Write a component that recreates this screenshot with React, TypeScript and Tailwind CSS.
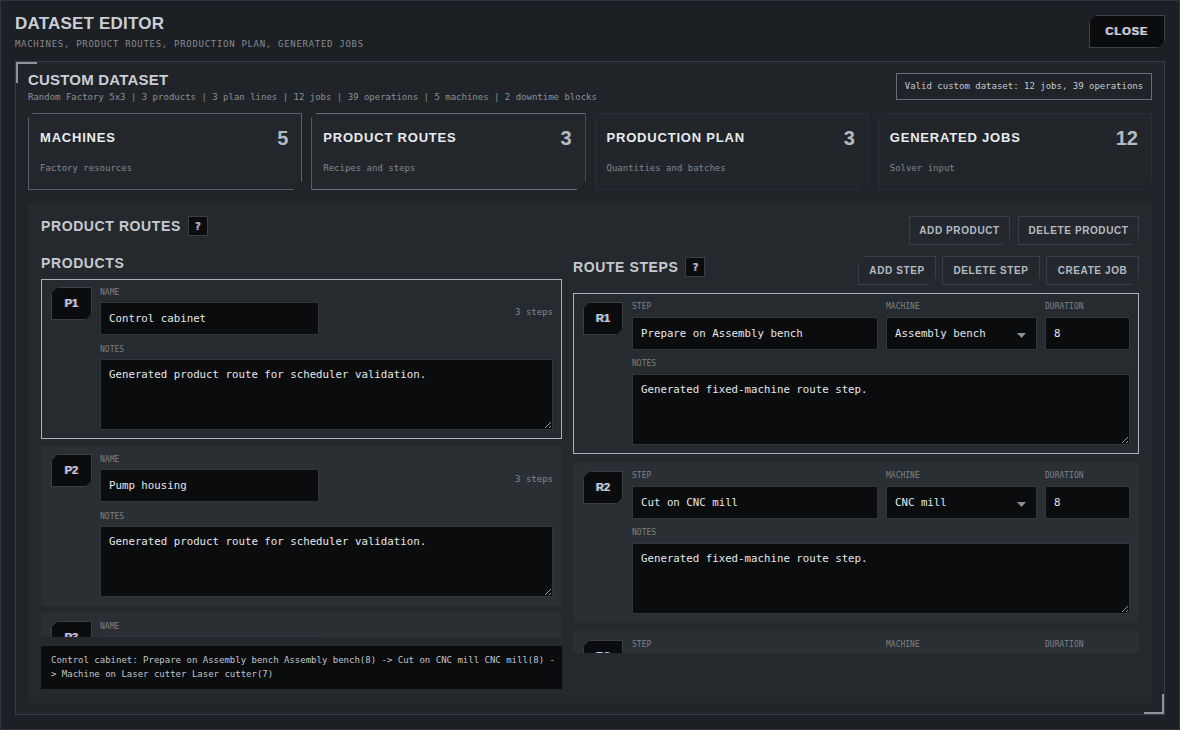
import React from "react";

const head = "font-['Liberation_Sans',Arial,sans-serif] font-bold uppercase";
const mono = "font-['DejaVu_Sans_Mono','Liberation_Mono',monospace]";
const chroma = "[text-shadow:-0.7px_0_rgba(80,150,255,0.75),0.7px_0_rgba(255,110,70,0.6)]";

const cutTab =
  "[clip-path:polygon(5px_0,100%_0,100%_calc(100%_-_9px),calc(100%_-_9px)_100%,0_100%,0_5px)]";
const cutBoth =
  "[clip-path:polygon(7px_0,100%_0,100%_calc(100%_-_7px),calc(100%_-_7px)_100%,0_100%,0_7px)]";
const cutBR =
  "[clip-path:polygon(0_0,100%_0,100%_calc(100%_-_7px),calc(100%_-_7px)_100%,0_100%)]";

function Label({ children, className = "" }: { children: React.ReactNode; className?: string }) {
  return (
    <div className={`${mono} text-[8px] leading-[10px] uppercase text-[#7b8188] ${className}`}>
      {children}
    </div>
  );
}

function Badge({ label, w }: { label: string; w: string }) {
  return (
    <div
      className={`${w} h-[33px] shrink-0 border border-[#3a3f46] bg-[#0b0c0e] flex items-center justify-center ${head} text-[11px] text-[#c2ccd9] ${chroma} ${cutBoth}`}
    >
      {label}
    </div>
  );
}

const inputCls = `${mono} h-[33px] border border-[#31363c] bg-[#0b0c0e] px-[8px] text-[10.75px] text-[#e4e7ea] outline-none`;
const areaCls = `${mono} block h-[71px] w-full border border-[#31363c] bg-[#0b0c0e] pl-[8px] pt-[8px] text-[10.75px] leading-[14px] text-[#e4e7ea] outline-none resize-y`;

function Button({ children, w, cut = cutBR }: { children: React.ReactNode; w: string; cut?: string }) {
  return (
    <div
      className={`${w} h-[29px] border border-[#3a3f46] bg-[#24282d] flex items-center justify-center ${head} text-[10px] tracking-[0.6px] text-[#b3bac2] ${cut}`}
    >
      {children}
    </div>
  );
}

function Help() {
  return (
    <div
      className={`w-[20px] h-[20px] border border-[#3a3f46] bg-[#0b0c0e] flex items-center justify-center ${mono} font-bold text-[10px] text-[#b8c4d6] ${chroma}`}
    >
      ?
    </div>
  );
}

function ProductCard({ id, name, selected }: { id: string; name: string; selected?: boolean }) {
  return (
    <div
      className={`h-[160px] shrink-0 border ${
        selected ? "border-[#aab0b6] bg-[#262b30]" : "border-transparent bg-[#2a2f34]"
      } pl-[9px] pr-[8px] pt-[7px] flex gap-[8px]`}
    >
      <Badge label={id} w="w-[41px]" />
      <div className="flex-1 mt-[1px]">
        <Label>Name</Label>
        <div className="mt-[4px] flex justify-between">
          <input className={`${inputCls} w-[219px]`} defaultValue={name} />
          <span className={`${mono} mt-[4px] text-[9px] leading-[12px] text-[#80868d]`}>3 steps</span>
        </div>
        <Label className="mt-[10px]">Notes</Label>
        <textarea
          className={`${areaCls} mt-[4px]`}
          defaultValue="Generated product route for scheduler validation."
        />
      </div>
    </div>
  );
}

function RouteCard({
  id,
  step,
  machine,
  dur,
  selected,
}: {
  id: string;
  step: string;
  machine: string;
  dur: string;
  selected?: boolean;
}) {
  return (
    <div
      className={`h-[161px] shrink-0 border ${
        selected ? "border-[#aab0b6] bg-[#262b30]" : "border-transparent bg-[#2a2f34]"
      } pl-[9px] pr-[8px] pt-[8px] flex gap-[9px]`}
    >
      <Badge label={id} w="w-[40px]" />
      <div className="flex-1">
        <div className="grid grid-cols-[1fr_151px_85px] gap-x-[8px]">
          <div>
            <Label>Step</Label>
            <input className={`${inputCls} mt-[5px] w-full`} defaultValue={step} />
          </div>
          <div>
            <Label>Machine</Label>
            <div
              className={`${mono} mt-[5px] h-[33px] border border-[#31363c] bg-[#0b0c0e] pl-[8px] pr-[10px] flex items-center justify-between text-[10.75px] leading-[14px] text-[#e4e7ea]`}
            >
              <span className="pt-[1px]">{machine}</span>
              <svg width="9" height="5" viewBox="0 0 9 5" className="mt-[4px]">
                <path d="M0 0 H9 L4.5 5 Z" fill="#8a9097" />
              </svg>
            </div>
          </div>
          <div>
            <Label>Duration</Label>
            <input className={`${inputCls} mt-[5px] w-full`} defaultValue={dur} />
          </div>
        </div>
        <Label className="mt-[9px]">Notes</Label>
        <textarea className={`${areaCls} mt-[5px]`} defaultValue="Generated fixed-machine route step." />
      </div>
    </div>
  );
}

const tabs = [
  { t: "Machines", n: "5", s: "Factory resources", b: "border-[#5a5f66] bg-[#23272c]" },
  { t: "Product Routes", n: "3", s: "Recipes and steps", b: "border-[#6a6f76] bg-[#23272c]" },
  { t: "Production Plan", n: "3", s: "Quantities and batches", b: "border-[#2a2f35] bg-[#22262b]" },
  { t: "Generated Jobs", n: "12", s: "Solver input", b: "border-[#2a2f35] bg-[#22262b]" },
];

export default function App() {
  return (
    <div className="w-[1180px] h-[730px] overflow-hidden border border-[#2f343a] bg-[#1c1f23]">
      {/* Header */}
      <div className="h-[60px] px-[14px] pt-[12px] flex justify-between items-start">
        <div>
          <div className={`${head} text-[17px] leading-[22px] tracking-[0.2px] text-[#c9ced5]`}>Dataset Editor</div>
          <div className={`${mono} mt-[3px] text-[9px] leading-[12px] tracking-[0.7px] text-[#858b92]`}>
            MACHINES, PRODUCT ROUTES, PRODUCTION PLAN, GENERATED JOBS
          </div>
        </div>
        <div
          className={`mt-[2px] w-[76px] h-[33px] border border-[#3c4249] bg-[#0b0c0e] flex items-center justify-center ${head} text-[11px] tracking-[1px] text-[#cfd6df] ${chroma} ${cutBoth}`}
        >
          Close
        </div>
      </div>

      {/* Panel */}
      <div className="relative mx-[14px] h-[654px] border border-[#393e45] bg-[#202428] pl-[12px] pr-[12px]">
        <div className="absolute left-0 top-0 w-[21px] h-[21px] border-l-2 border-t-2 border-[#8d939a]" />
        <div className="absolute right-0 bottom-0 w-[20px] h-[20px] border-r-2 border-b-2 border-[#8d939a]" />

        <div className="pt-[9px] flex justify-between items-start">
          <div>
            <div className={`${head} text-[15px] leading-[18px] tracking-[0.2px] text-[#c9ced5]`}>Custom Dataset</div>
            <div className={`${mono} mt-[2px] text-[9px] leading-[12px] text-[#8a9097]`}>
              Random Factory 5x3 | 3 products | 3 plan lines | 12 jobs | 39 operations | 5 machines | 2
              downtime blocks
            </div>
          </div>
          <div
            className={`mt-[2px] h-[27px] w-[256px] border border-[#6a6f76] flex items-center justify-center ${mono} text-[9px] text-[#c3c8ce]`}
          >
            Valid custom dataset: 12 jobs, 39 operations
          </div>
        </div>

        {/* Tabs */}
        <div className="mt-[10px] grid grid-cols-4 gap-[9px]">
          {tabs.map((tb) => (
            <div key={tb.t} className={`h-[77px] border ${tb.b} pl-[11px] pr-[13px] pt-[16px] ${cutTab}`}>
              <div className="flex items-center justify-between h-[16px]">
                <span className={`${head} text-[13px] leading-[16px] tracking-[0.8px] text-[#e9ecef]`}>
                  {tb.t}
                </span>
                <span className={`${head} text-[20px] leading-[16px] text-[#b4bac1]`}>{tb.n}</span>
              </div>
              <div className={`${mono} mt-[16px] text-[9px] leading-[12px] text-[#81878e]`}>{tb.s}</div>
            </div>
          ))}
        </div>

        {/* Section */}
        <div className="mt-[13px] h-[500px] bg-[#25292e] px-[13px] pt-[13px]">
          <div className="flex justify-between items-start h-[29px]">
            <div className="flex items-center gap-[7px] h-[20px]">
              <span className={`${head} text-[14px] leading-[20px] tracking-[0.6px] text-[#c5cad0]`}>
                Product Routes
              </span>
              <Help />
            </div>
            <div className="flex gap-[8px]">
              <Button w="w-[101px]">Add Product</Button>
              <Button w="w-[121px]">Delete Product</Button>
            </div>
          </div>

          <div className="mt-[8px] grid grid-cols-[521px_1fr] gap-x-[11px]">
            {/* Products */}
            <div>
              <div className={`${head} h-[20px] text-[14px] leading-[20px] tracking-[0.6px] text-[#c5cad0]`}>
                Products
              </div>
              <div className="mt-[6px] h-[358px] overflow-hidden flex flex-col gap-[7px]">
                <ProductCard id="P1" name="Control cabinet" selected />
                <ProductCard id="P2" name="Pump housing" />
                <ProductCard id="P3" name="Gear assembly" />
              </div>
              <div className={`mt-[9px] h-[43px] bg-[#0b0c0e] px-[10px] pt-[7px] ${mono} text-[9px] leading-[14px] text-[#c0c5cb] whitespace-nowrap`}>
                <div>
                  Control cabinet: Prepare on Assembly bench Assembly bench(8) -&gt; Cut on CNC mill CNC mill(8) -
                </div>
                <div>&gt; Machine on Laser cutter Laser cutter(7)</div>
              </div>
            </div>

            {/* Route steps */}
            <div>
              <div className="mt-[3px] h-[29px] flex justify-between items-start">
                <div className="flex items-center gap-[7px] h-[20px] mt-[1px]">
                  <span className={`${head} text-[14px] leading-[20px] tracking-[0.6px] text-[#c5cad0]`}>
                    Route Steps
                  </span>
                  <Help />
                </div>
                <div className="flex gap-[6px]">
                  <Button w="w-[78px]" cut={cutBoth}>Add Step</Button>
                  <Button w="w-[98px]">Delete Step</Button>
                  <Button w="w-[93px]">Create Job</Button>
                </div>
              </div>
              <div className="mt-[8px] h-[360px] overflow-hidden flex flex-col gap-[8px]">
                <RouteCard id="R1" step="Prepare on Assembly bench" machine="Assembly bench" dur="8" selected />
                <RouteCard id="R2" step="Cut on CNC mill" machine="CNC mill" dur="8" />
                <RouteCard id="R3" step="Machine on Laser cutter" machine="Laser cutter" dur="7" />
              </div>
            </div>
          </div>
        </div>
      </div>
    </div>
  );
}
